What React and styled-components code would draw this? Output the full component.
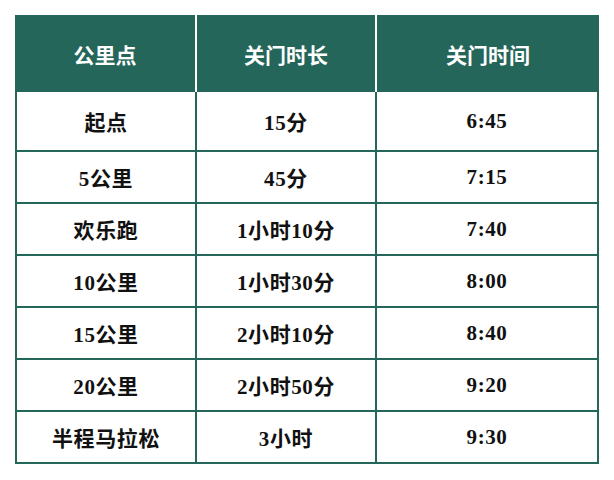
import React from "react";
import styled, { createGlobalStyle } from "styled-components";

const GREEN = "#24665a";

const rows = [
  ["起点", "15分", "6:45"],
  ["5公里", "45分", "7:15"],
  ["欢乐跑", "1小时10分", "7:40"],
  ["10公里", "1小时30分", "8:00"],
  ["15公里", "2小时10分", "8:40"],
  ["20公里", "2小时50分", "9:20"],
  ["半程马拉松", "3小时", "9:30"],
];

const App = () => {
  return (
    <>
      <GlobalStyle />
      <Page>
        <Table>
          <Header>
            <HeadCell>公里点</HeadCell>
            <HeadCell>关门时长</HeadCell>
            <HeadCell>关门时间</HeadCell>
          </Header>
          <Body>
            {rows.map((row, i) =>
              row.map((text, j) => (
                <Cell key={`${i}-${j}`} $first={i === 0}>
                  {text}
                </Cell>
              ))
            )}
          </Body>
        </Table>
      </Page>
    </>
  );
};

export default App;

// CSS styling

const GlobalStyle = createGlobalStyle`
  body {
    margin: 0;
    background: #ffffff;
  }
`;

const Page = styled.div`
  padding: 15px 0 0 15px;
  font-family: "Liberation Serif", "Noto Sans CJK SC", serif;
  font-weight: bold;
  font-size: 21px;
`;

const Table = styled.div`
  width: 584px;
`;

const Header = styled.div`
  display: grid;
  grid-template-columns: 180px 178px 222px;
  column-gap: 2px;
  height: 77px;
  background: #ffffff;
`;

const HeadCell = styled.div`
  display: flex;
  align-items: center;
  justify-content: center;
  background: ${GREEN};
  color: #ffffff;
`;

const Body = styled.div`
  display: grid;
  grid-template-columns: 178px 178px 220px;
  gap: 2px;
  border: 2px solid ${GREEN};
  border-top: 0;
  background: ${GREEN};
`;

const Cell = styled.div`
  display: flex;
  align-items: center;
  justify-content: center;
  height: ${(p) => (p.$first ? "58px" : "50px")};
  background: #ffffff;
  color: #111111;
  letter-spacing: 0.6px;
`;
